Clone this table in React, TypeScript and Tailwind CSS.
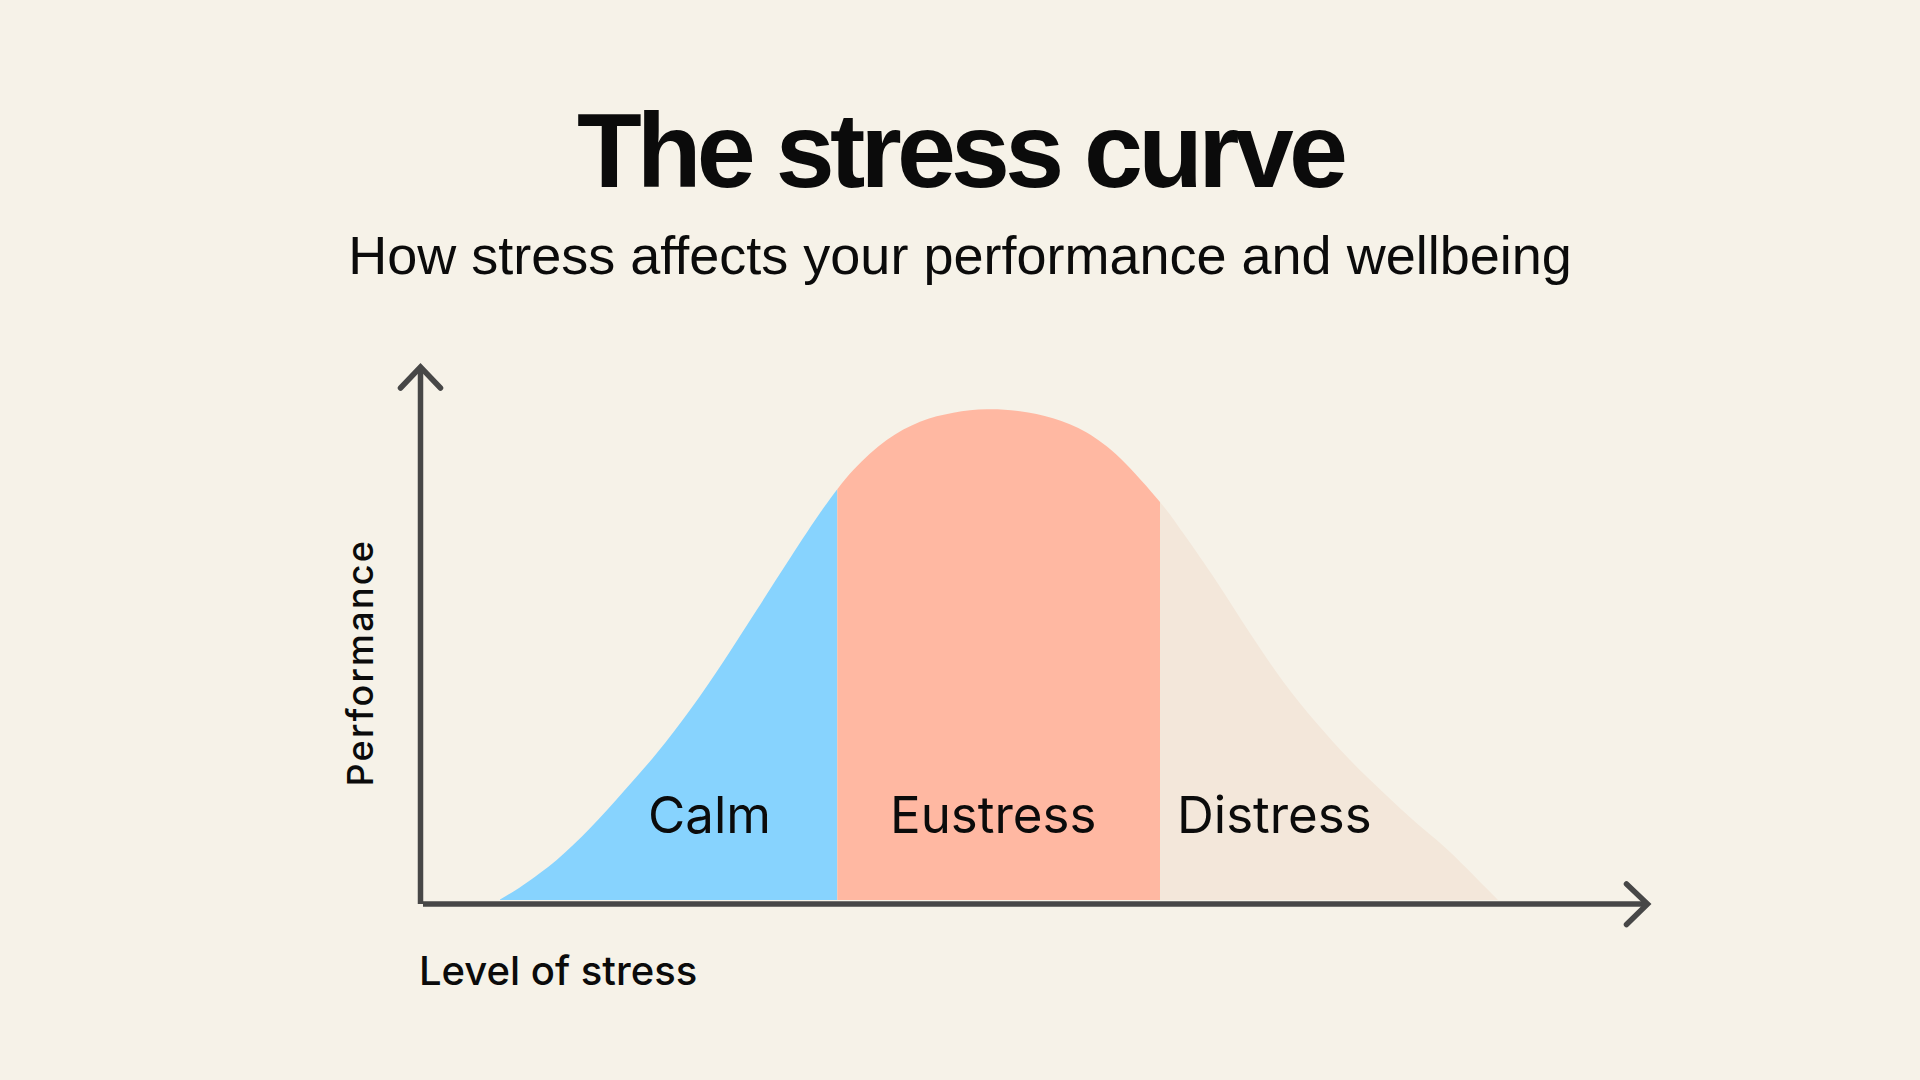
import React from "react";

type P = [number, number];

const curve: P[] = [
  [500, 899.5],
  [523.3, 885],
  [556.7, 860],
  [590, 828.3],
  [623.3, 791.7],
  [656.7, 753.3],
  [690, 710],
  [723.3, 661.7],
  [756.7, 610],
  [790, 558.3],
  [823.3, 508.3],
  [853.3, 470],
  [886.7, 440],
  [920, 421.7],
  [953.3, 412.7],
  [986.7, 409.3],
  [1020, 411.3],
  [1053, 418.3],
  [1086.7, 432.5],
  [1120, 458],
  [1160, 502],
  [1183.3, 533.3],
  [1216.7, 581.7],
  [1250, 633.3],
  [1283.3, 681.7],
  [1316.7, 723.3],
  [1350, 760],
  [1383.3, 792.5],
  [1416.7, 823.3],
  [1450, 852],
  [1498, 900],
];

function catmull(pts: P[]): string {
  const n = pts.length;
  let d = `M${pts[0][0]} ${pts[0][1]}`;
  for (let i = 0; i < n - 1; i++) {
    const p1 = pts[i];
    const p2 = pts[i + 1];
    const p0: P =
      i === 0 ? [2 * p1[0] - p2[0], 2 * p1[1] - p2[1]] : pts[i - 1];
    const p3: P =
      i + 2 < n ? pts[i + 2] : [2 * p2[0] - p1[0], 2 * p2[1] - p1[1]];
    const c1x = p1[0] + (p2[0] - p0[0]) / 6;
    const c1y = p1[1] + (p2[1] - p0[1]) / 6;
    const c2x = p2[0] - (p3[0] - p1[0]) / 6;
    const c2y = p2[1] - (p3[1] - p1[1]) / 6;
    d += ` C${c1x.toFixed(2)} ${c1y.toFixed(2)} ${c2x.toFixed(2)} ${c2y.toFixed(2)} ${p2[0]} ${p2[1]}`;
  }
  return d;
}

const area = catmull(curve) + " L1498 900 L500 900 Z";

export default function App() {
  return (
    <div className="w-[1920px] h-[1080px] bg-[#F6F2E8] overflow-hidden flex flex-col items-center text-[#0b0b0b]">
      <h1 className="mt-[97px] font-['Liberation_Sans',Arial,sans-serif] text-[106px] leading-none font-bold tracking-[-0.045em] whitespace-nowrap">
        The stress curve
      </h1>
      <p className="mt-[25px] font-['Liberation_Sans',Arial,sans-serif] text-[54px] leading-none whitespace-nowrap">
        How stress affects your performance and wellbeing
      </p>
      <svg
        className="mt-[18px] block shrink-0 font-['Inter','Noto_Sans',sans-serif]"
        width={1920}
        height={780}
        viewBox="0 300 1920 780"
      >
        <defs>
          <clipPath id="under">
            <path d={area} />
          </clipPath>
        </defs>
        <g clipPath="url(#under)">
          <rect x={490} y={380} width={347.3} height={530} fill="#87D3FE" />
          <rect x={837.3} y={380} width={322.7} height={530} fill="#FFB8A2" />
          <rect x={1160} y={380} width={350} height={530} fill="#F3E7DA" />
        </g>

        {/* axes */}
        <line x1={420.5} y1={367} x2={420.5} y2={904} stroke="#474747" strokeWidth={5.5} />
        <line x1={423} y1={904} x2={1647} y2={904} stroke="#474747" strokeWidth={5.5} />
        <polyline
          points="400.5,388 420.5,367 440.5,388"
          fill="none"
          stroke="#474747"
          strokeWidth={5.5}
          strokeLinecap="round"
          strokeLinejoin="miter"
        />
        <polyline
          points="1626.5,884 1647.5,904 1626.5,924.5"
          fill="none"
          stroke="#474747"
          strokeWidth={5.5}
          strokeLinecap="round"
          strokeLinejoin="miter"
        />

        {/* region labels */}
        <text x={648} y={833} fontSize={51} fill="#0b0b0b">
          Calm
        </text>
        <text x={890} y={833} fontSize={51} fill="#0b0b0b">
          Eustress
        </text>
        <text x={1177} y={833} fontSize={51} fill="#0b0b0b">
          Distress
        </text>

        {/* axis labels */}
        <text x={419} y={985} fontSize={40} fontWeight={500} fill="#0b0b0b">
          Level of stress
        </text>
        <text
          transform="translate(372.5 786.5) rotate(-90)"
          x={0}
          y={0}
          fontSize={36}
          fontWeight={500}
          letterSpacing={2.2}
          fill="#0b0b0b"
        >
          Performance
        </text>
      </svg>
    </div>
  );
}
